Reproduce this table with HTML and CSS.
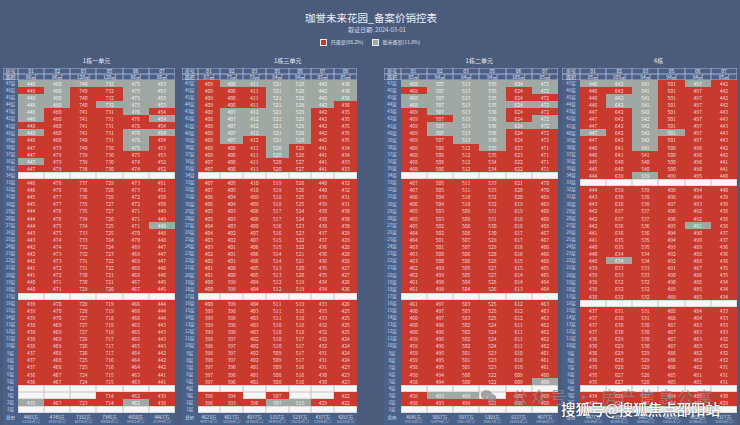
FILE: index.html
```html
<!DOCTYPE html>
<html lang="zh-CN">
<head>
<meta charset="utf-8">
<title>珈誉未来花园_备案价销控表</title>
<link rel="stylesheet" href="styles.css">
</head>
<body>
<header class="head">
  <h1 class="title">珈誉未来花园_备案价销控表</h1>
  <div class="date">取证日期: 2024-03-01</div>
  <div class="legend">
    <span class="item"><span class="sw sw-red"></span>已备案(88.2%)</span>
    <span class="item"><span class="sw sw-gray"></span>暂未备案(11.8%)</span>
  </div>
</header>
<main class="boards">
  <section class="board b1">
    <div class="board-title">1栋一单元</div>
    <div class="grid n6" id="t1"></div>
  </section>
  <section class="board b2">
    <div class="board-title">1栋三单元</div>
    <div class="grid n7" id="t2"></div>
  </section>
  <section class="board b3">
    <div class="board-title">1栋二单元</div>
    <div class="grid n6" id="t3"></div>
  </section>
  <section class="board b4">
    <div class="board-title">4栋</div>
    <div class="grid n6" id="t4"></div>
  </section>
</main>
<div class="wm wm-gray">
  <svg class="wm-icon" viewBox="0 0 24 24" width="17" height="17"><path d="M9 3C4.6 3 1 6 1 9.7c0 2.1 1.2 4 3 5.2l-.7 2.6 3-1.5c.9.3 1.8.4 2.7.4h.5a5.9 5.9 0 0 1-.2-1.5c0-3.5 3.3-6.3 7.4-6.3h.5C16.5 5.3 13.1 3 9 3z"/><path d="M23 14c0-3-2.9-5.4-6.5-5.4S10 11 10 14s3 5.4 6.5 5.4c.7 0 1.4-.1 2-.3l2.5 1.3-.6-2.1C22 17.2 23 15.7 23 14z"/></svg>
  <span>公众号 · 房产信息公寓</span>
</div>
<div class="wm wm-sohu">搜狐号@搜狐焦点邵阳站</div>
<script src="script.js"></script>
</body>
</html>
```

FILE: styles.css
```css
html, body {
  margin: 0;
  height: 425px;
  overflow: hidden;
}
body {
  width: 740px;
  position: relative;
  background: #4b5b7b;
  color: #e6ebf4;
  font-family: "Noto Sans CJK SC", "Noto Sans", "DejaVu Sans", sans-serif;
}
.head {
  padding-top: 10px;
  text-align: center;
}
.title {
  margin: 0;
  font-size: 10.5px;
  font-weight: 400;
  line-height: 15px;
  color: #eef1f7;
  padding-left: 2px;
}
.date {
  font-size: 6px;
  line-height: 10px;
  color: #d6dcea;
  padding-left: 14px;
}
.legend {
  margin-top: 2px;
  display: flex;
  justify-content: center;
  gap: 8px;
  font-size: 5px;
  line-height: 10px;
  color: #dfe4ef;
}
.item {
  display: flex;
  align-items: center;
}
.sw {
  width: 5px;
  height: 5px;
  margin-right: 4px;
  border: 0.5px solid #e8ecf4;
}
.sw-red { background: #c8392e; }
.sw-gray { background: #a0a8a3; }

.boards {
  display: flex;
  padding-left: 3px;
  margin-top: 7px;
}
.board { flex: none; }
.b1 { width: 172px; --label: 15px; }
.b2 { width: 175px; --label: 15.5px; margin-left: 7px; }
.b3 { width: 174.5px; --label: 17px; margin-left: 26.5px; }
.b4 { width: 175px; --label: 18px; margin-left: 4px; }

.board-title {
  height: 13.7px;
  line-height: 13.7px;
  margin-left: var(--label);
  text-align: center;
  font-size: 6px;
  color: #e4e9f3;
}
.b2 .board-title { padding-left: 21px; }

.grid {
  display: grid;
  grid-template-rows: 6px 6px repeat(47, 7.1px) 14px;
}
.n6 { grid-template-columns: var(--label) repeat(6, 1fr); }
.n7 { grid-template-columns: var(--label) repeat(7, 1fr); }

.cell {
  display: flex;
  align-items: center;
  justify-content: center;
  font-size: 5px;
  line-height: 1;
  white-space: nowrap;
  overflow: hidden;
}
.red { background: #c8392e; color: #f6dcd6; }
.gray { background: #a0a8a3; color: #f4f6f5; }
.white { background: #f7f7f7; box-shadow: inset 0 0 0 0.5px #c4c4c4; }
.lab { background: #4a6189; color: #cfd7ea; font-size: 4.5px; }
.hd {
  background: #4c5f86;
  box-shadow: inset 0 0 0 0.5px #a7b6d4;
  color: #e4e9f4;
  font-size: 5px;
}
.foot {
  flex-direction: column;
  justify-content: flex-start;
  padding-top: 2px;
  background: #4a6189;
  color: #dfe5f1;
}
.tot { font-size: 4.6px; line-height: 5px; }
.avg { font-size: 3.4px; line-height: 4px; color: #b9c4dc; }

.wm { position: absolute; white-space: nowrap; }
.wm-gray {
  left: 480px;
  top: 384px;
  display: flex;
  align-items: center;
  gap: 15px;
  color: rgba(140, 140, 140, 0.8);
  font-size: 16px;
  letter-spacing: 3px;
}
.wm-icon { fill: rgba(140, 140, 140, 0.8); }
.wm-sohu {
  left: 561px;
  top: 401px;
  font-size: 14.5px;
  line-height: 15px;
  font-weight: 500;
  color: #ffffff;
  text-shadow: 0 0 2px rgba(0, 0, 0, 0.6);
}
```

FILE: script.js
```js
(function () {
  var AF = [47, 40, 33, 18, 5, 2];
  function interp(a, f) {
    if (f >= AF[0]) return a[0];
    for (var i = 0; i < AF.length - 1; i++) {
      var hi = AF[i], lo = AF[i + 1];
      if (f <= hi && f >= lo) {
        return Math.round(a[i] + (a[i + 1] - a[i]) * (hi - f) / (hi - lo));
      }
    }
    return a[a.length - 1];
  }
  var T = [
    {
      id: 't1', cols: ['01', '02', '03', '05', '06', '07'],
      areas: ['86㎡', '86㎡', '120㎡', '120㎡', '86㎡', '86㎡'],
      anch: [[448, 448, 446, 440, 436, 435], [480, 480, 478, 471, 467, 467], [740, 741, 737, 729, 724, 723], [732, 731, 729, 720, 715, 714], [475, 476, 473, 467, 463, 462], [453, 454, 451, 445, 441, 438]],
      blank: [34, 17, 4, 1],
      gray: { 47: [0, 1, 2, 3, 4, 5], 46: [1, 4, 5], 45: [0, 1, 4, 5], 44: [0, 1, 3, 4, 5], 43: [0, 4], 42: [0, 5], 40: [0, 4, 5], 39: [4], 38: [4], 36: [0], 27: [5], 2: [0, 4] },
      white: { 3: [0, 1, 2] },
      tot: ['4465万', '4745万', '7332万', '7345万', '4650万', '4467万']
    },
    {
      id: 't2', cols: ['01', '02', '03', '05', '06', '07', '08'],
      areas: ['87㎡', '75㎡', '78㎡', '94㎡', '94㎡', '85㎡', '85㎡'],
      anch: [[409, 408, 407, 400, 397, 396], [406, 407, 405, 399, 396, 393], [411, 412, 410, 404, 401, 396], [521, 521, 519, 512, 508, 507], [528, 529, 526, 519, 516, 515], [442, 442, 440, 434, 430, 429], [436, 435, 432, 426, 423, 422]],
      blank: [34, 17, 4, 1],
      gray: { 47: [1, 2, 3, 4, 5, 6], 46: [3, 4, 5, 6], 45: [3, 4, 5, 6], 44: [3, 4, 5], 43: [1, 2, 3, 4], 42: [1, 2, 3, 4], 41: [1, 2, 3, 4], 40: [1, 2, 3, 4], 39: [1, 3, 4], 38: [3], 37: [3], 2: [3, 4] },
      white: { 3: [2, 4, 5] },
      tot: ['4623万', '4017万', '4077万', '5157万', '5237万', '4377万', '4257万']
    },
    {
      id: 't3', cols: ['01', '02', '03', '05', '06', '07'],
      areas: ['85㎡', '94㎡', '94㎡', '94㎡', '105㎡', '85㎡'],
      anch: [[468, 469, 467, 461, 458, 458], [507, 507, 505, 498, 494, 493], [513, 513, 511, 504, 500, 499], [535, 536, 533, 526, 522, 521], [624, 624, 621, 613, 609, 608], [472, 472, 470, 464, 460, 460]],
      blank: [34, 17, 4, 1],
      gray: { 47: [0, 1, 2, 3, 4, 5], 46: [1, 2, 3, 5], 45: [0, 1, 2, 3], 44: [0, 1, 2, 3, 4, 5], 43: [1, 2, 3], 42: [2, 3, 5], 41: [1, 2, 3, 4, 5], 40: [1, 2, 3], 39: [2, 3], 38: [3], 5: [5], 3: [1, 2] },
      white: { 3: [3] },
      tot: ['4645万', '5057万', '5077万', '5303万', '6127万', '4677万']
    },
    {
      id: 't4', cols: ['01', '02', '03', '05', '06', '07'],
      areas: ['85㎡', '105㎡', '94㎡', '94㎡', '94㎡', '85㎡'],
      anch: [[446, 447, 444, 438, 435, 434], [642, 642, 639, 632, 627, 626], [541, 542, 539, 532, 528, 527], [501, 501, 499, 489, 485, 484], [497, 497, 495, 485, 481, 480], [442, 443, 440, 434, 431, 429]],
      blank: [33, 16, 4, 1],
      gray: { 47: [0, 1, 2, 4], 46: [2], 45: [1, 2], 44: [1, 2], 43: [2], 42: [2], 41: [2], 40: [0, 2, 3], 39: [2], 38: [2], 34: [2], 27: [4], 22: [1] },
      white: {},
      tot: ['4477万', '6353万', '5407万', '4925万', '4826万', '4377万']
    }
  ];
  function has(map, f, c) {
    return map[f] ? map[f].indexOf(c) >= 0 : false;
  }
  T.forEach(function (t) {
    var g = document.getElementById(t.id);
    function cell(cls, txt) {
      var d = document.createElement('div');
      d.className = 'cell ' + cls;
      if (txt !== null && txt !== undefined) d.textContent = txt;
      g.appendChild(d);
      return d;
    }
    cell('lab hd', '房号');
    t.cols.forEach(function (c) { cell('hd', c); });
    cell('lab hd', '面积');
    t.areas.forEach(function (a) { cell('hd', a); });
    for (var f = 47; f >= 1; f--) {
      cell('lab', f + '层');
      var blank = t.blank.indexOf(f) >= 0;
      for (var c = 0; c < t.cols.length; c++) {
        if (blank || has(t.white, f, c)) { cell('white', ''); continue; }
        cell(has(t.gray, f, c) ? 'gray' : 'red', String(interp(t.anch[c], f)));
      }
    }
    cell('lab foot', '总价');
    t.tot.forEach(function (v, c) {
      var d = cell('foot', null);
      var a = document.createElement('span');
      a.className = 'tot';
      a.textContent = v;
      var b = document.createElement('span');
      b.className = 'avg';
      b.textContent = Math.round(t.anch[c][3] * 10000 / parseInt(t.areas[c], 10)) + '元/㎡';
      d.appendChild(a);
      d.appendChild(b);
    });
  });
})();
```
